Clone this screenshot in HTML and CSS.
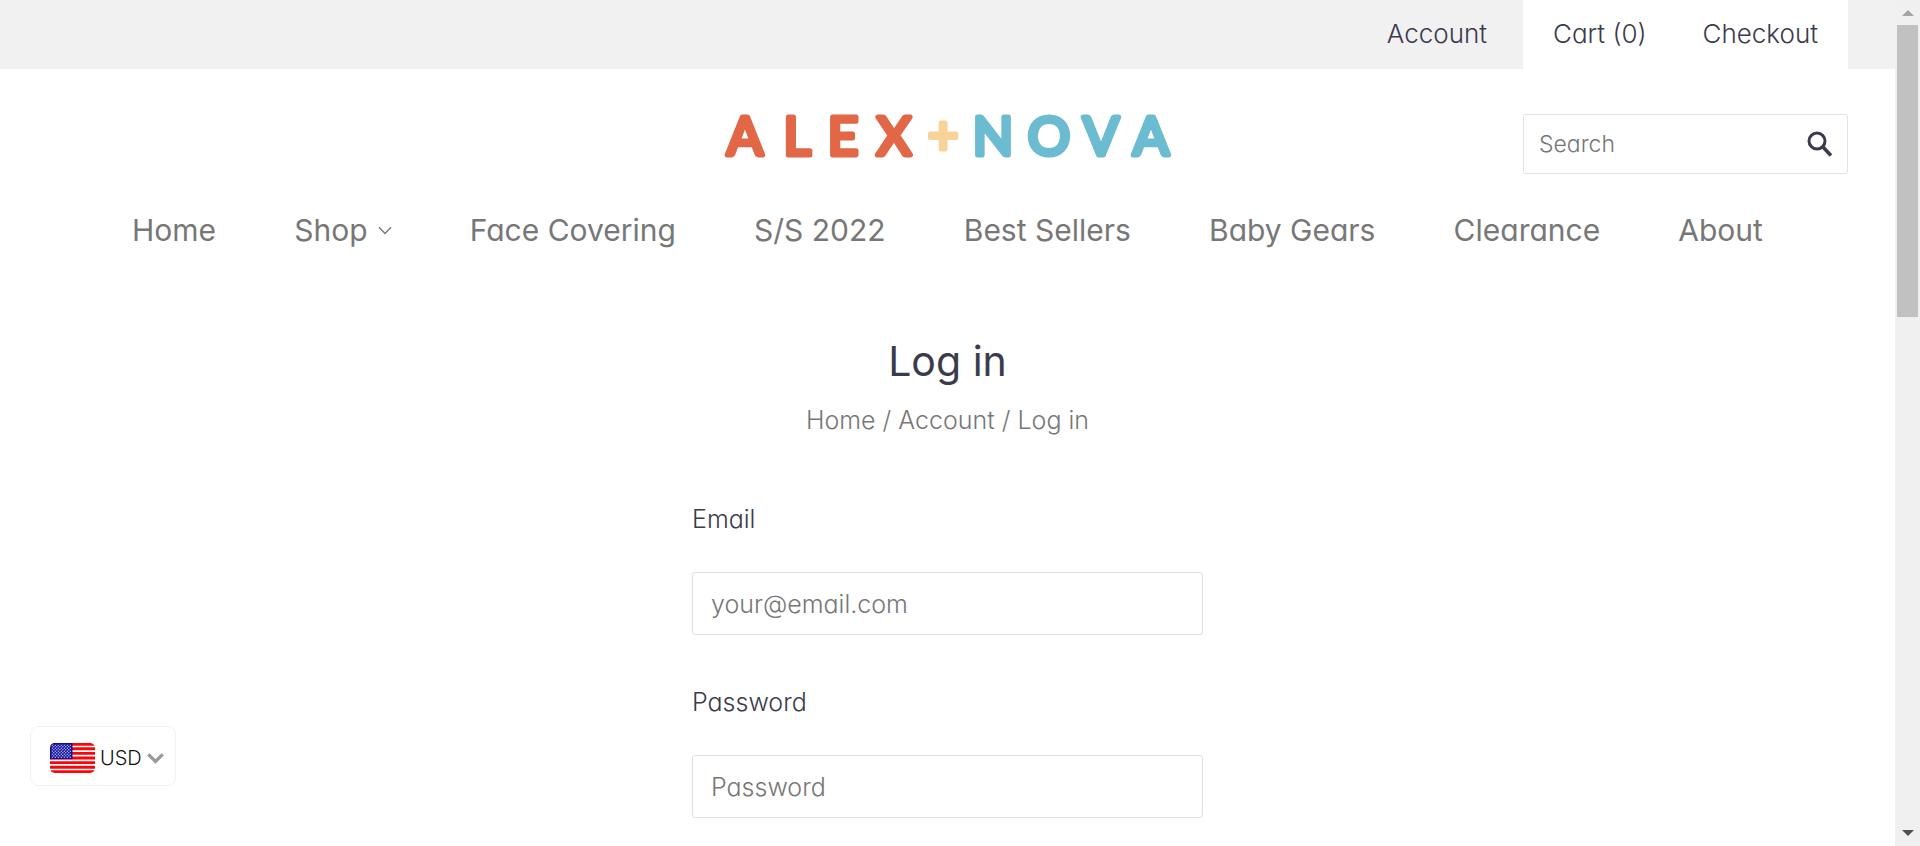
FILE: index.html
```html
<!DOCTYPE html>
<html lang="en">
<head>
<meta charset="utf-8">
<title>Log in – Alex + Nova</title>
<link rel="stylesheet" href="styles.css">
</head>
<body>
<div class="page">
  <div class="topbar">
    <a class="topbar-link" href="#">Account</a>
    <div class="topbar-cart">
      <a class="topbar-link" href="#">Cart (0)</a>
      <a class="topbar-link" href="#">Checkout</a>
    </div>
  </div>

  <header class="header">
    <a class="logo" href="#" aria-label="Alex + Nova">
      <svg class="logo-art" width="452" height="60" viewBox="0 0 452 60">
        <text class="logo-alex" x="23 75 121 172" y="41">ALEX</text>
        <text class="logo-plus" x="221" y="40">+</text>
        <text class="logo-nova" x="271 327 379 429" y="41">NOVA</text>
      </svg>
    </a>
    <form class="search">
      <input class="search-input" type="search" placeholder="Search" aria-label="Search">
      <button class="search-button" type="button" aria-label="Submit search">
        <svg width="26" height="26" viewBox="0 0 26 26" fill="none" stroke="currentColor">
          <circle cx="11" cy="10" r="8" stroke-width="3"/>
          <path d="M16.5 15.5L25 24.5" stroke-width="3.6"/>
        </svg>
      </button>
    </form>
  </header>

  <nav class="nav">
    <a href="#">Home</a>
    <a class="nav-shop" href="#">Shop
      <svg width="14" height="9" viewBox="0 0 14 9" fill="none" stroke="currentColor" stroke-width="1.4"><path d="M1 1.2L7 7.4L13 1.2"/></svg>
    </a>
    <a href="#">Face Covering</a>
    <a href="#">S/S 2022</a>
    <a href="#">Best Sellers</a>
    <a href="#">Baby Gears</a>
    <a href="#">Clearance</a>
    <a href="#">About</a>
  </nav>

  <main class="main">
    <h1 class="title">Log in</h1>
    <div class="breadcrumb"><a href="#">Home</a> / <a href="#">Account</a> / Log in</div>
    <form class="login">
      <div class="field">
        <label for="email">Email</label>
        <input id="email" type="email" placeholder="your@email.com">
      </div>
      <div class="field">
        <label for="password">Password</label>
        <input id="password" type="password" placeholder="Password">
      </div>
    </form>
  </main>
</div>

<div class="scrollbar" aria-hidden="true">
  <svg width="12" height="6" viewBox="0 0 12 6"><path d="M0 6L6 0L12 6Z" fill="#a3a3a3"/></svg>
  <div class="scrollbar-track"><div class="scrollbar-thumb"></div></div>
  <svg width="12" height="6" viewBox="0 0 12 6"><path d="M0 0L6 6L12 0Z" fill="#505050"/></svg>
</div>

<div class="currency">
  <svg class="flag" width="45" height="30" viewBox="0 0 45 30">
    <defs>
      <pattern id="stars" width="3" height="3" patternUnits="userSpaceOnUse">
        <rect width="3" height="3" fill="#10109c"/>
        <circle cx="0.8" cy="0.8" r="0.7" fill="#c4c4ee"/>
        <circle cx="2.3" cy="2.3" r="0.7" fill="#c4c4ee"/>
      </pattern>
    </defs>
    <rect width="45" height="30" fill="#fff"/>
    <path d="M0 1.2H45M0 5.8H45M0 10.4H45M0 15H45M0 19.6H45M0 24.2H45M0 28.8H45" stroke="#fb0508" stroke-width="2.9"/>
    <rect width="22.5" height="16.2" fill="#10109c"/>
    <rect x="1.5" y="1.5" width="19.5" height="13.5" fill="url(#stars)"/>
  </svg>
  <select class="currency-select" aria-label="Currency"><option>USD</option></select>
  <svg width="17" height="11" viewBox="0 0 17 11" fill="none" stroke="#999" stroke-width="3.4"><path d="M1.3 1.4L8.5 8.4L15.7 1.4"/></svg>
</div>
</body>
</html>
```
FILE: styles.css
```css
* {
  box-sizing: border-box;
}

body {
  margin: 0;
  min-height: 100vh;
  display: flex;
  background: #fff;
  color: #3b3b4b;
  font-family: Inter, "Liberation Sans", sans-serif;
  font-feature-settings: "cv11";
  font-size: 25px;
  font-weight: 300;
  line-height: 40px;
}

a {
  color: inherit;
  text-decoration: none;
}

input,
select,
button {
  font: inherit;
  font-feature-settings: inherit;
  color: inherit;
}

input::placeholder {
  color: #777;
  opacity: 1;
}

.page {
  flex: 1;
  min-width: 0;
}

.topbar {
  display: flex;
  justify-content: flex-end;
  align-items: baseline;
  gap: 36px;
  padding: 0 47px;
  background: #f1f1f1;
  font-size: 26px;
}

.topbar-cart {
  display: flex;
  justify-content: space-between;
  width: 325px;
  padding: 14px 30px 15px;
  background: #fff;
}

.header {
  display: grid;
  grid-template-columns: 1fr auto 1fr;
  padding: 45px 47px 0;
}

.logo {
  grid-column: 2;
  display: flex;
}

.logo-art {
  overflow: visible;
  font-family: Lato, sans-serif;
  font-size: 53px;
  font-weight: 400;
  text-anchor: middle;
  stroke-width: 5px;
  stroke-linejoin: round;
}

.logo-alex {
  fill: #e16747;
  stroke: #e16747;
}

.logo-plus {
  fill: #f8d399;
  stroke: #f8d399;
}

.logo-nova {
  fill: #6bbbd1;
  stroke: #6bbbd1;
}

.search {
  justify-self: end;
  display: flex;
  align-items: center;
  width: 325px;
  height: 60px;
  padding: 0 15px;
  border: 1px solid #e3e3e3;
  border-radius: 3px;
}

.search-input {
  flex: 1;
  min-width: 0;
  padding: 0;
  border: 0;
  background: none;
  font-size: 23px;
  outline: none;
}

.search-button {
  display: flex;
  padding: 0;
  border: 0;
  background: none;
}

.nav {
  display: flex;
  justify-content: space-between;
  padding: 36px 132px 0;
  color: #777;
  font-size: 30px;
  font-weight: 400;
}

.nav-shop {
  display: flex;
  align-items: center;
  gap: 10px;
}

.main {
  display: flex;
  flex-direction: column;
  align-items: center;
  padding: 81px 24px 28px;
}

.title {
  margin: 0;
  font-size: 41px;
  font-weight: 400;
  line-height: 60px;
}

.breadcrumb {
  margin-top: 9px;
  color: #777;
}

.login {
  display: grid;
  gap: 47px;
  width: 100%;
  max-width: 511px;
  margin-top: 59px;
}

.field {
  display: grid;
  gap: 33px;
}

.field input {
  width: 100%;
  height: 63px;
  padding: 0 18px;
  border: 1px solid #e0e0e0;
  border-radius: 3px;
  background: #fff;
}

.scrollbar {
  display: flex;
  flex-direction: column;
  align-items: center;
  gap: 9px;
  width: 25px;
  padding: 10px 2px;
  background: #f0f0f0;
}

.scrollbar-track {
  flex: 1;
  width: 100%;
}

.scrollbar-thumb {
  height: 292px;
  background: #c1c1c1;
}

.currency {
  position: fixed;
  left: 30px;
  bottom: 60px;
  display: flex;
  align-items: center;
  width: 146px;
  height: 60px;
  padding: 4px 11px 0 19px;
  border: 1px solid #f2f2f2;
  border-radius: 8px;
  background: #fff;
}

.flag {
  border-radius: 5px;
}

.currency-select {
  flex: 1;
  min-width: 0;
  padding: 0 0 0 5px;
  border: 0;
  background: none;
  color: #111;
  font-size: 20px;
  appearance: none;
}
```
